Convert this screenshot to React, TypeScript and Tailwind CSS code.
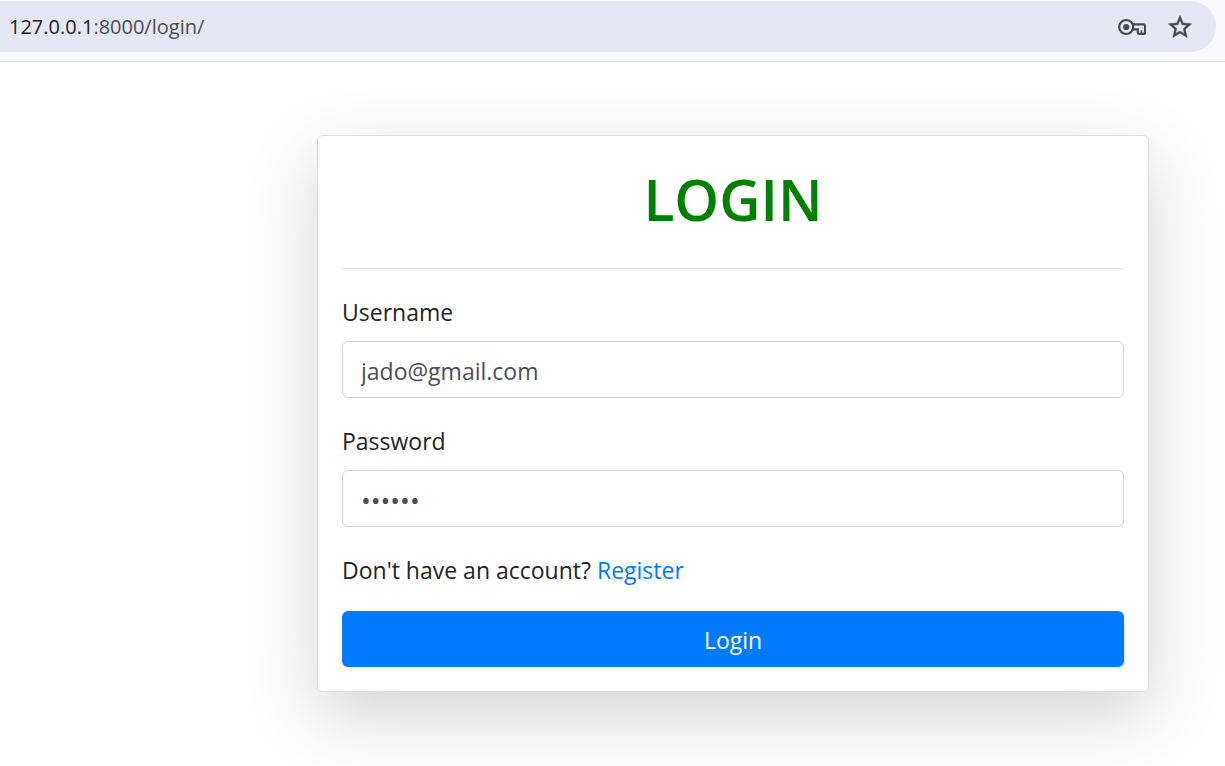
import type { InputHTMLAttributes } from "react";

function KeyIcon() {
  return (
    <svg width="28" height="18" viewBox="0 0 28 18" fill="none" stroke="#46484d" strokeWidth="2.2" aria-hidden="true">
      <path d="M14.6 6.4H25.6Q27 6.4 27 7.8V14.6Q27 15.9 25.8 15.9H21Q19.8 15.9 19.8 14.7V11.4H14.6" />
      <path d="M23.4 12.2V16" strokeWidth="1.6" />
      <circle cx="8.2" cy="9" r="7" />
      <circle cx="8.2" cy="9" r="3.1" fill="#46484d" stroke="none" />
    </svg>
  );
}

function StarIcon() {
  return (
    <svg width="28" height="28" viewBox="0 0 24 24" fill="#46484d" stroke="#46484d" strokeWidth="0.4" aria-hidden="true">
      <path d="m22 9.24-7.19-.62L12 2 9.19 8.63 2 9.24l5.46 4.73L5.82 21 12 17.27 18.18 21l-1.63-7.03L22 9.24zM12 15.4l-3.76 2.27 1-4.28-3.32-2.88 4.38-.38L12 6.1l1.71 4.04 4.38.38-3.32 2.88 1 4.28L12 15.4z" />
    </svg>
  );
}

function AddressBar() {
  return (
    <header className="border-b border-[#e1deeb] bg-[#f9f9ff] pt-px pr-[9px] pb-[9px]">
      <div className="flex h-[51px] items-center justify-between rounded-r-full bg-[#e5e8f3] pr-[22px] pl-[9px]">
        <p className="text-[20px] text-[#4b4d52]">
          <span className="text-[#1f2024]">127.0.0.1</span>:8000/login/
        </p>
        <div className="flex items-center gap-5">
          <button type="button" aria-label="Saved passwords">
            <KeyIcon />
          </button>
          <button type="button" aria-label="Bookmark this page">
            <StarIcon />
          </button>
        </div>
      </div>
    </header>
  );
}

type FieldProps = InputHTMLAttributes<HTMLInputElement> & { id: string; label: string };

function Field({ id, label, ...input }: FieldProps) {
  return (
    <div className="mb-6">
      <label htmlFor={id} className="mb-2.5 block">
        {label}
      </label>
      <input
        id={id}
        name={id}
        className="block h-[57px] w-full rounded-md border border-[#ced4da] bg-white px-[18px] pt-0.5 text-[#495057] focus:border-[#80bdff] focus:outline-none [&[type=password]]:text-[26px]"
        {...input}
      />
    </div>
  );
}

export default function App() {
  return (
    <div className="flex min-h-screen flex-col overflow-hidden bg-white font-['Open_Sans',sans-serif]">
      <AddressBar />
      <main className="pt-[73px] pr-[76px] pb-[74px] pl-[317px]">
        <form
          onSubmit={(event) => event.preventDefault()}
          className="rounded-md border border-[#dfdfdf] bg-white p-6 text-[23px] leading-[38px] text-[#212529] shadow-[0_24px_72px_rgba(0,0,0,0.175)]"
        >
          <h1 className="mb-[30px] text-center text-[57px] leading-[78px] font-semibold text-[#008000]">LOGIN</h1>
          <hr className="mb-6 border-[#e5e5e5]" />
          <Field id="username" label="Username" type="text" defaultValue="jado@gmail.com" />
          <Field id="password" label="Password" type="password" defaultValue="secret" />
          <p className="mb-[22px]">
            Don't have an account?{" "}
            <a href="#register" className="text-[#007bff]">
              Register
            </a>
          </p>
          <button type="submit" className="block h-14 w-full rounded-md bg-[#007bff] pt-0.5 text-white">
            Login
          </button>
        </form>
      </main>
    </div>
  );
}
